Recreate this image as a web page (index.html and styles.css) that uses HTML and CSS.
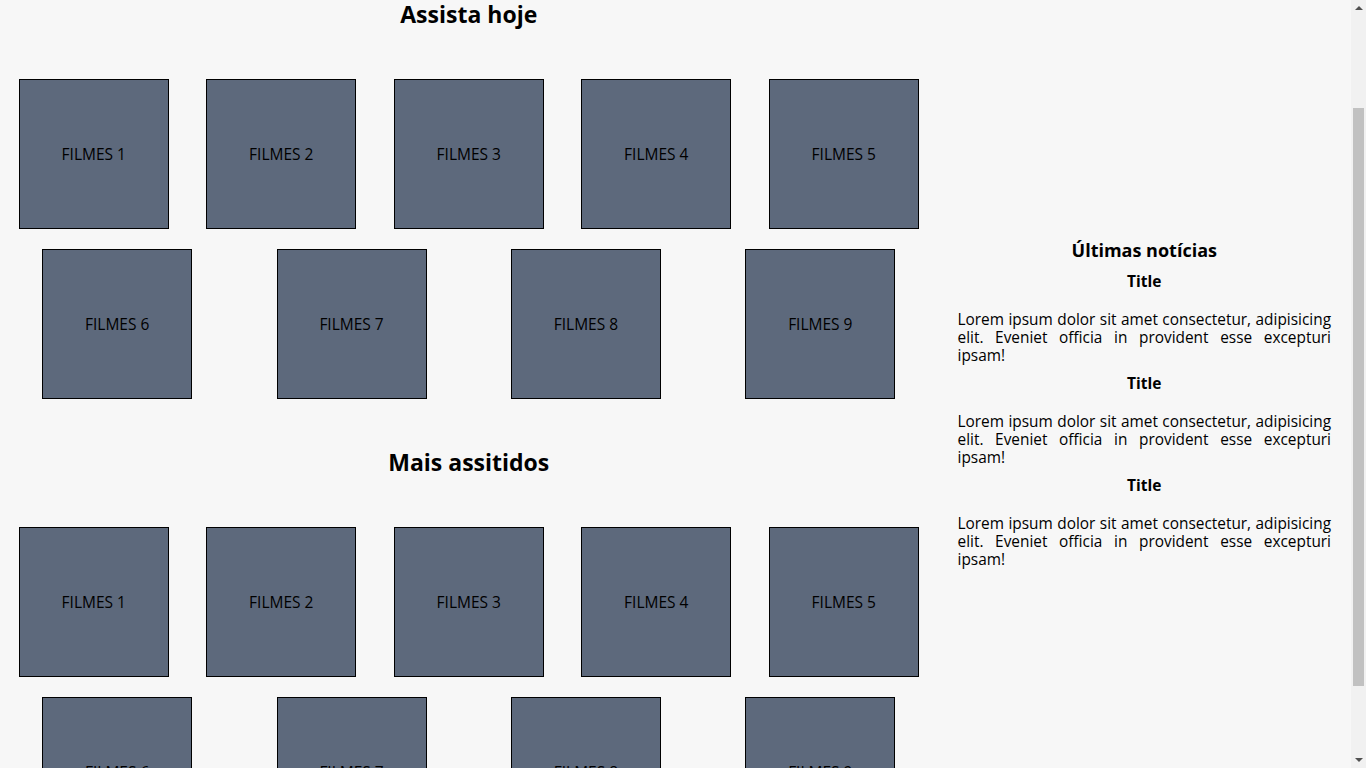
FILE: index.html
```html
<!DOCTYPE html>
<html lang="pt-BR">
<head>
<meta charset="utf-8">
<title>Filmes</title>
<link rel="stylesheet" href="styles.css">
</head>
<body>
<div class="page">
  <main class="main">
    <section class="section">
      <h2 class="section-title">Assista hoje</h2>
      <div class="movies">
        <div class="movie">FILMES 1</div>
        <div class="movie">FILMES 2</div>
        <div class="movie">FILMES 3</div>
        <div class="movie">FILMES 4</div>
        <div class="movie">FILMES 5</div>
        <div class="movie">FILMES 6</div>
        <div class="movie">FILMES 7</div>
        <div class="movie">FILMES 8</div>
        <div class="movie">FILMES 9</div>
      </div>
    </section>
    <section class="section section-next">
      <h2 class="section-title">Mais assitidos</h2>
      <div class="movies">
        <div class="movie">FILMES 1</div>
        <div class="movie">FILMES 2</div>
        <div class="movie">FILMES 3</div>
        <div class="movie">FILMES 4</div>
        <div class="movie">FILMES 5</div>
        <div class="movie">FILMES 6</div>
        <div class="movie">FILMES 7</div>
        <div class="movie">FILMES 8</div>
        <div class="movie">FILMES 9</div>
      </div>
    </section>
  </main>
  <aside class="news">
    <h3 class="news-heading">Últimas notícias</h3>
    <article class="news-item">
      <h4 class="news-title">Title</h4>
      <p class="news-text">Lorem ipsum dolor sit amet consectetur, adipisicing elit. Eveniet officia in provident esse excepturi ipsam!</p>
    </article>
    <article class="news-item">
      <h4 class="news-title">Title</h4>
      <p class="news-text">Lorem ipsum dolor sit amet consectetur, adipisicing elit. Eveniet officia in provident esse excepturi ipsam!</p>
    </article>
    <article class="news-item">
      <h4 class="news-title">Title</h4>
      <p class="news-text">Lorem ipsum dolor sit amet consectetur, adipisicing elit. Eveniet officia in provident esse excepturi ipsam!</p>
    </article>
  </aside>
</div>
<div class="scrollbar" aria-hidden="true">
  <div class="scroll-btn"><span class="arrow-up"></span></div>
  <div class="scroll-track"><div class="scroll-thumb"></div></div>
  <div class="scroll-btn"><span class="arrow-down"></span></div>
</div>
</body>
</html>
```
FILE: styles.css
```css
html, body {
  margin: 0;
  padding: 0;
}

body {
  background: #f7f7f7;
  color: #000;
  font-family: "Open Sans", "Noto Sans", sans-serif;
  font-size: 15.4px;
  padding-right: 15px;
}

.page {
  display: grid;
  grid-template-columns: 937.5px 1fr;
  align-items: start;
}

.main {
  padding-top: 0;
}

.section-title {
  margin: 0;
  font-size: 23px;
  line-height: 28px;
  font-weight: 700;
  text-align: center;
}

.movies {
  margin-top: 41px;
  display: flex;
  flex-wrap: wrap;
  justify-content: space-around;
}

.section-next {
  margin-top: 39px;
}

.movie {
  box-sizing: border-box;
  width: 150px;
  height: 150px;
  margin: 10px;
  background: #5d697c;
  border: 1px solid #000;
  display: flex;
  align-items: center;
  justify-content: center;
  font-size: 15.5px;
  color: #000;
}

.news {
  padding: 239px 20px 0;
}

.news-heading {
  margin: 0;
  font-size: 18px;
  line-height: 22px;
  font-weight: 700;
  text-align: center;
}

.news-item {
  margin-top: 11px;
}

.news-item + .news-item {
  margin-top: 9px;
}

.news-title {
  margin: 0;
  font-size: 15.5px;
  line-height: 18px;
  font-weight: 700;
  text-align: center;
}

.news-text {
  margin: 21px 0 0;
  line-height: 18px;
  text-align: justify;
}

/* Window scrollbar as it appears in the capture */
.scrollbar {
  position: fixed;
  top: 0;
  right: 0;
  width: 15px;
  height: 100vh;
  background: #f1f1f1;
  display: flex;
  flex-direction: column;
}

.scroll-btn {
  height: 15px;
  display: flex;
  align-items: center;
  justify-content: center;
}

.arrow-up,
.arrow-down {
  width: 0;
  height: 0;
  border-left: 4px solid transparent;
  border-right: 4px solid transparent;
}

.arrow-up {
  border-bottom: 4px solid #505050;
  margin-top: 1px;
}

.arrow-down {
  border-top: 4px solid #505050;
  margin-bottom: 1px;
}

.scroll-track {
  flex: 1;
  padding: 0 2px;
}

.scroll-thumb {
  margin-top: 93px;
  height: 578px;
  background: #c1c1c1;
}
```
